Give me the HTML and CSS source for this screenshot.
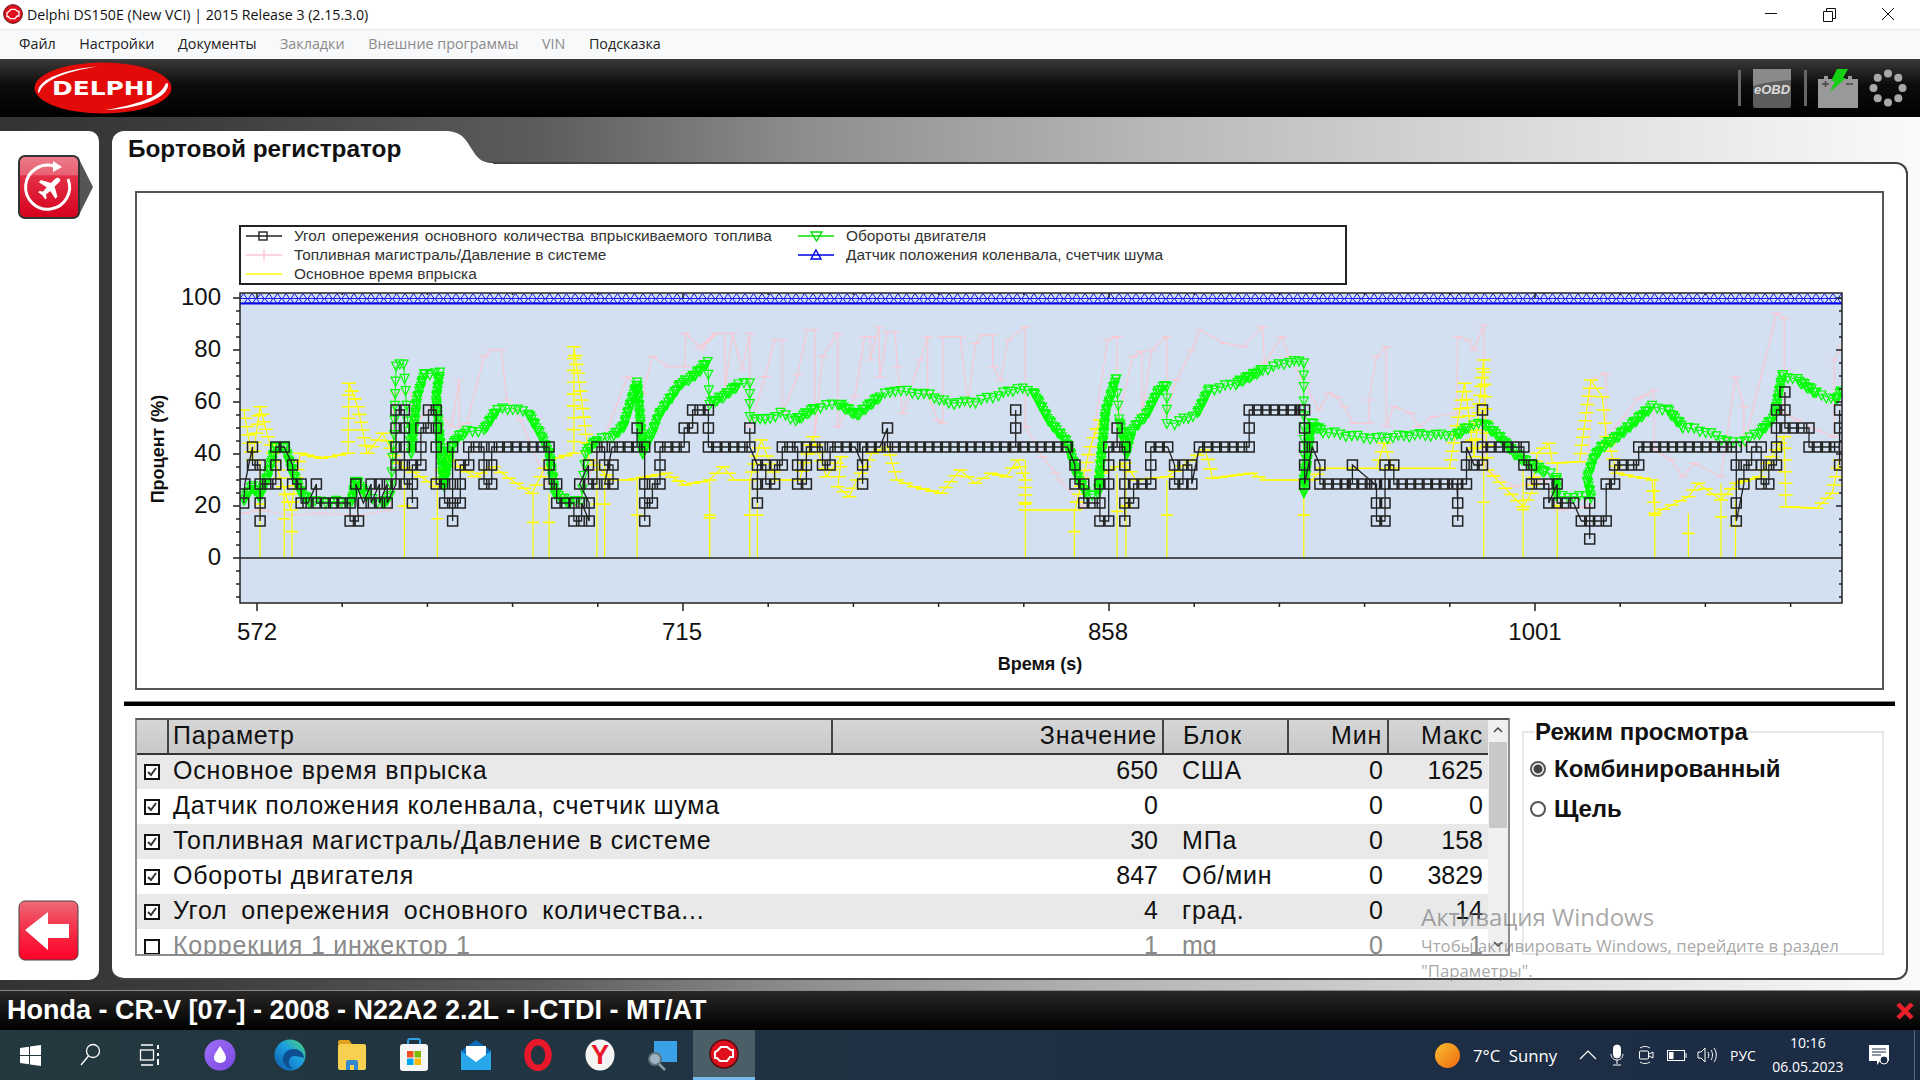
FILE: index.html
```html
<!DOCTYPE html>
<html lang="ru">
<head>
<meta charset="utf-8">
<title>Delphi DS150E</title>
<link rel="stylesheet" href="styles.css">
</head>
<body>
<svg class="defs" width="0" height="0" aria-hidden="true">
  <defs>
    <linearGradient id="gRedIco" x1="0" y1="0" x2="0" y2="1"><stop offset="0" stop-color="#ec7c8a"/><stop offset=".3" stop-color="#e86274"/><stop offset=".32" stop-color="#e43048"/><stop offset="1" stop-color="#d4001c"/></linearGradient>
    <symbol id="delphi-ico" viewBox="0 0 30 30">
      <circle cx="15" cy="15" r="14" fill="#e0101c" stroke="#5a0a10" stroke-width="1.5"/>
      <path d="M8 12l4-4h6l4 3h2v7h-3l-3 4h-7l-3-3H6v-6z" fill="none" stroke="#fff" stroke-width="2"/>
    </symbol>
    <symbol id="chk" viewBox="0 0 16 16">
      <rect x="1" y="1" width="14" height="14" fill="#fff" stroke="#111" stroke-width="2"/>
      <path d="M4 8l3 3 5-7" fill="none" stroke="#333" stroke-width="2"/>
    </symbol>
    <symbol id="unchk" viewBox="0 0 16 16">
      <rect x="1" y="1" width="14" height="14" fill="#fff" stroke="#111" stroke-width="2"/>
    </symbol>
  </defs>
</svg>

<header class="titlebar">
  <svg class="title-ico" width="20" height="20"><use href="#delphi-ico"/></svg>
  <span class="title-text">Delphi DS150E (New VCI) | 2015 Release 3 (2.15.3.0)</span>
  <div class="win-ctrls">
    <svg width="58" height="29" viewBox="0 0 58 29"><path d="M22 13.500h12" stroke="#111" fill="none"/></svg>
    <svg width="58" height="29" viewBox="0 0 58 29"><path d="M22.500 11.500h9v10h-9zM25.500 11V8.500h9v10H32" stroke="#111" fill="none"/></svg>
    <svg width="58" height="29" viewBox="0 0 58 29"><path d="M23 8l12 12M35 8L23 20" stroke="#111" fill="none"/></svg>
  </div>
</header>

<nav class="menubar">
  <span>Файл</span><span>Настройки</span><span>Документы</span>
  <span class="off">Закладки</span><span class="off">Внешние программы</span><span class="off">VIN</span>
  <span class="hint">Подсказка</span>
</nav>

<div class="appbar">
  <svg class="logo" width="138" height="52" viewBox="0 0 138 52">
    <ellipse cx="69" cy="26" rx="68.500" ry="25.500" fill="#e30a0a"/>
    <path d="M4 30C4 16 34 7 66 4 48 7 12 14 6 29 5 31 5 32 4 30z" fill="#fff"/>
    <path d="M134 22c1 14-29 25-64 26 22-3 56-11 61-25 1-2 2-3 3-1z" fill="#fff"/>
    <text class="logo-text" x="69" y="33" text-anchor="middle" textLength="102" lengthAdjust="spacingAndGlyphs">DELPHI</text>
  </svg>
  <div class="appbar-tools">
    <span class="sep"></span>
    <svg class="tool-obd" width="40" height="39" viewBox="0 0 40 39">
      <rect x="1" width="38" height="39" rx="2" fill="#5c5c5c"/>
      <path d="M1 0h38v11c-12 1-26 2-38 6z" fill="#8a8a8a"/>
      <text class="obd-text" x="20" y="25" text-anchor="middle">eOBD</text>
    </svg>
    <span class="sep"></span>
    <svg class="tool-bat" width="42" height="39" viewBox="0 0 42 39">
      <path d="M1 10h6V7h4v3h20V7h4v3h6v29H1z" fill="#999"/>
      <path d="M5 15h7M8.500 12v6M29 15h7" stroke="#444" stroke-width="1.500"/>
      <path d="M20 0h11l-5 9h3L13 23l5-11h-4z" fill="#14d010"/>
    </svg>
    <svg class="tool-dots" width="38" height="38" viewBox="0 0 38 38" fill="#a8a8a8">
      <circle cx="19" cy="4.500" r="4"/><circle cx="29.300" cy="8.700" r="4"/><circle cx="33.500" cy="19" r="4"/><circle cx="29.300" cy="29.300" r="4"/>
      <circle cx="19" cy="33.500" r="4"/><circle cx="8.700" cy="29.300" r="4"/><circle cx="4.500" cy="19" r="4"/><circle cx="8.700" cy="8.700" r="4"/>
    </svg>
  </div>
</div>

<div class="workspace">
  <aside class="sidebar">
    <svg class="side-mode" width="76" height="64" viewBox="0 0 76 64">
      <path d="M60 2l15 30-15 30z" fill="#555"/>
      <rect x="1" y="1" width="60" height="62" rx="6" fill="url(#gRedIco)" stroke="#333" stroke-width="2"/>
      <path d="M37 11.500A22 22 0 1 0 50 24" fill="none" stroke="#fff" stroke-width="3"/>
      <path d="M35 6l9 6-9 5z" fill="#fff"/>
      <g transform="translate(30.500 33) scale(.72) translate(-30.500 -33)">
        <path d="M46 20c-2-2-5-1-7 1l-5 5-14-4-3 3 11 7-5 6-5-1-2 2 6 4 4 6 2-2-1-5 6-5 7 11 3-3-4-14 5-5c2-2 4-4 2-6z" fill="#fff"/>
      </g>
    </svg>
    <svg class="side-back" width="61" height="61" viewBox="0 0 61 61">
      <defs><linearGradient id="gBack" x1="0" y1="0" x2="0" y2="1"><stop offset="0" stop-color="#ee6a78"/><stop offset=".45" stop-color="#f4324a"/><stop offset="1" stop-color="#ff0028"/></linearGradient></defs>
      <rect x="1" y="1" width="59" height="59" rx="6" fill="url(#gBack)" stroke="#444"/>
      <path d="M7 30L30 12v12h21v14H30v12z" fill="#fff"/>
    </svg>
  </aside>

  <main class="main">
    <div class="tab-row">
      <h1 class="tab">Бортовой регистратор</h1>
      <svg class="tab-curve" width="50" height="34" viewBox="0 0 50 34">
        <path d="M0 0C20 0 22 8 30 20 36 30 42 32 50 32v2H0z" fill="#fff"/>
      </svg>
    </div>
    <section class="panel">
      <div class="chart-frame">
        <svg id="chart" class="chart" width="1745" height="495" viewBox="137 193 1745 495" role="img" aria-label="График">
          <defs><clipPath id="plotClip"><rect x="240" y="293" width="1602" height="310"/></clipPath></defs>
          <rect x="240" y="293" width="1602" height="310" fill="#d2e0f1"/>
          <rect class="legend-box" x="240" y="226" width="1106" height="58"/>
          <g class="legend-keys">
            <path d="M246 236h36" stroke="#222"/><rect x="259" y="232" width="8" height="8" fill="none" stroke="#222"/>
            <path d="M246 255h36" stroke="#f9c6d0"/><path d="M264 249v12" stroke="#f9c6d0"/>
            <path d="M246 274h36" stroke="#ffff00"/>
            <path d="M798 236h36" stroke="#00e000"/><path d="M811 232h11l-5.500 9z" fill="none" stroke="#00e000"/>
            <path d="M798 255h36" stroke="#0000e0"/><path d="M816 250l5 9h-10z" fill="none" stroke="#0000e0"/>
          </g>
          <g class="legend-text">
            <text class="wide" x="294" y="241">Угол опережения основного количества впрыскиваемого топлива</text>
            <text x="294" y="260">Топливная магистраль/Давление в системе</text>
            <text x="294" y="279">Основное время впрыска</text>
            <text x="846" y="241">Обороты двигателя</text>
            <text x="846" y="260">Датчик положения коленвала, счетчик шума</text>
          </g>
          <g id="series" clip-path="url(#plotClip)"></g>
          <g id="axes"></g>
          <g class="tick-labels">
            <text x="221" y="305">100</text><text x="221" y="357">80</text><text x="221" y="409">60</text>
            <text x="221" y="461">40</text><text x="221" y="513">20</text><text x="221" y="565">0</text>
          </g>
          <g class="x-labels">
            <text x="257" y="640">572</text><text x="682" y="640">715</text><text x="1108" y="640">858</text><text x="1535" y="640">1001</text>
          </g>
          <text class="axis-title" x="1040" y="670" text-anchor="middle">Время (s)</text>
          <text class="axis-title" transform="translate(164 449) rotate(-90)" text-anchor="middle">Процент (%)</text>
        </svg>
      </div>
      <div class="divider"></div>
      <div class="lower">
        <div class="table-box">
          <div class="table-clip">
            <table class="params">
              <colgroup><col class="c-chk"><col class="c-name"><col class="c-val"><col class="c-unit"><col class="c-min"><col class="c-max"></colgroup>
              <thead>
                <tr><th></th><th class="l">Параметр</th><th class="r">Значение</th><th class="l unit">Блок</th><th class="r">Мин</th><th class="r last">Макс</th></tr>
              </thead>
              <tbody>
                <tr><td class="chk"><svg width="16" height="16"><use href="#chk"/></svg></td><td class="t">Основное время впрыска</td><td class="r">650</td><td class="unit t">США</td><td class="r">0</td><td class="r">1625</td></tr>
                <tr><td class="chk"><svg width="16" height="16"><use href="#chk"/></svg></td><td class="t">Датчик положения коленвала, счетчик шума</td><td class="r">0</td><td class="unit t"></td><td class="r">0</td><td class="r">0</td></tr>
                <tr><td class="chk"><svg width="16" height="16"><use href="#chk"/></svg></td><td class="t">Топливная магистраль/Давление в системе</td><td class="r">30</td><td class="unit t">МПа</td><td class="r">0</td><td class="r">158</td></tr>
                <tr><td class="chk"><svg width="16" height="16"><use href="#chk"/></svg></td><td class="t">Обороты двигателя</td><td class="r">847</td><td class="unit t">Об/мин</td><td class="r">0</td><td class="r">3829</td></tr>
                <tr><td class="chk"><svg width="16" height="16"><use href="#chk"/></svg></td><td class="t wide">Угол опережения основного количества...</td><td class="r">4</td><td class="unit t">град.</td><td class="r">0</td><td class="r">14</td></tr>
                <tr class="muted"><td class="chk"><svg width="16" height="16"><use href="#unchk"/></svg></td><td class="t">Коррекция 1 инжектор 1</td><td class="r">1</td><td class="unit">mg</td><td class="r">0</td><td class="r">1</td></tr>
              </tbody>
            </table>
          </div>
          <div class="scrollbar">
            <svg width="20" height="20" viewBox="0 0 20 20"><path d="M6 12l4-4 4 4" fill="none" stroke="#444" stroke-width="1.500"/></svg>
            <div class="thumb"></div>
            <svg class="down" width="20" height="20" viewBox="0 0 20 20"><path d="M6 8l4 4 4-4" fill="none" stroke="#444" stroke-width="1.500"/></svg>
          </div>
        </div>
        <fieldset class="view-mode">
          <legend>Режим просмотра</legend>
          <div class="radio-row"><span class="radio on"></span>Комбинированный</div>
          <div class="radio-row"><span class="radio"></span>Щель</div>
        </fieldset>
      </div>
    </section>
  </main>
</div>

<div class="statusbar">
  <span>Honda - CR-V [07-] - 2008 - N22A2 2.2L - I-CTDI - MT/AT</span>
  <svg class="status-x" width="20" height="20" viewBox="0 0 20 20"><path d="M3 3l14 14M17 3L3 17" stroke="#e8202a" stroke-width="4.500"/></svg>
</div>

<footer class="taskbar">
  <div class="task t60"><svg width="21" height="21" viewBox="0 0 21 21" fill="#fff"><path d="M0 3l9-1.300V10H0zM10 1.500L21 0v10H10zM0 11h9v8.300L0 18zM10 11h11v10l-11-1.500z"/></svg></div>
  <div class="task t60"><svg width="22" height="24" viewBox="0 0 22 24" fill="none" stroke="#fff" stroke-width="1.300"><circle cx="14" cy="8" r="6.500"/><path d="M9.500 13L2 22"/></svg></div>
  <div class="task t60"><svg width="22" height="22" viewBox="0 0 22 22" fill="none" stroke="#fff" stroke-width="1.300"><path d="M2 1h12M2 21h12"/><rect x="1.500" y="6" width="13" height="10"/><path d="M19 1v4M19 9v3M19 15v6" stroke-width="2"/></svg></div>
  <div class="task t60"><svg width="32" height="32" viewBox="0 0 32 32"><defs><linearGradient id="gAl" x1="0" y1="0" x2="1" y2="1"><stop offset="0" stop-color="#a070f8"/><stop offset="1" stop-color="#7a48e0"/></linearGradient></defs><circle cx="16" cy="16" r="15.500" fill="url(#gAl)"/><path d="M16 7c3 5 6 8 6 12a6 5 0 0 1-12 0c0-4 3-7 6-12z" fill="#fff"/></svg></div>
  <div class="task t62 after-alice"><svg width="32" height="32" viewBox="0 0 32 32"><defs><linearGradient id="gEd" x1="0" y1="1" x2="1" y2="0"><stop offset="0" stop-color="#0c59a4"/><stop offset=".55" stop-color="#1b9de2"/><stop offset="1" stop-color="#4fd66a"/></linearGradient></defs><circle cx="16" cy="16" r="15.500" fill="url(#gEd)"/><path d="M30 19c0-6-6-9-11-9-6 0-11 5-10 12 1 5 6 8 10 8-3-2-5-5-4-8 0-3 3-5 6-5 3 0 6 1 9 2z" fill="#0d4f90"/></svg></div>
  <div class="task t62"><svg width="30" height="32" viewBox="0 0 30 32"><path d="M1 3a2 2 0 0 1 2-2h9l3 4h-14z" fill="#e0a020"/><rect x="1" y="5" width="28" height="26" rx="2" fill="#f8d050"/><path d="M9 31V23a2 2 0 0 1 2-2h8a2 2 0 0 1 2 2v8h-4v-5h-4v5z" fill="#2f88d0"/></svg></div>
  <div class="task t62"><svg width="30" height="34" viewBox="0 0 30 34"><path d="M9 6V3a2 2 0 0 1 2-2h8a2 2 0 0 1 2 2v3" fill="none" stroke="#2f9fe8" stroke-width="2"/><rect x="1" y="6" width="28" height="27" rx="3" fill="#f6f6f6"/><rect x="8" y="13" width="6.500" height="6.500" fill="#f25022"/><rect x="15.500" y="13" width="6.500" height="6.500" fill="#7fba00"/><rect x="8" y="20.500" width="6.500" height="6.500" fill="#00a4ef"/><rect x="15.500" y="20.500" width="6.500" height="6.500" fill="#ffb900"/></svg></div>
  <div class="task t62"><svg width="30" height="30" viewBox="0 0 30 30"><path d="M0 11L15 0l15 11v19H0z" fill="#0c6cb8"/><path d="M5 6h20v16H5z" fill="#fff"/><path d="M0 11l15 11 15-11v19H0z" fill="#28a8ea"/></svg></div>
  <div class="task t62"><svg width="30" height="32" viewBox="0 0 30 32"><ellipse cx="15" cy="16" rx="10.500" ry="13" fill="none" stroke="#e8182a" stroke-width="6.500"/></svg></div>
  <div class="task t62"><svg width="30" height="32" viewBox="0 0 30 32"><ellipse cx="15" cy="16" rx="14.500" ry="15.500" fill="#f4f4f4"/><text class="yx" x="15" y="25" text-anchor="middle">Y</text></svg></div>
  <div class="task t62"><svg width="32" height="32" viewBox="0 0 32 32"><rect x="8" y="2" width="23" height="21" fill="#3aa0e8"/><circle cx="9" cy="20" r="6" fill="#9fb4c4" stroke="#607078" stroke-width="2"/><path d="M13 25l6 6" stroke="#8a98a0" stroke-width="2.500"/></svg></div>
  <div class="task t62 active"><svg width="30" height="30"><use href="#delphi-ico"/></svg></div>
  <div class="tray">
    <span class="sun"></span>
    <span class="weather">7°C&nbsp;&nbsp;Sunny</span>
    <svg class="tr chev" width="18" height="10" viewBox="0 0 18 10"><path d="M1 9l8-8 8 8" fill="none" stroke="#fff" stroke-width="1.200"/></svg>
    <svg class="tr" width="14" height="22" viewBox="0 0 14 22" fill="none" stroke="#fff"><rect x="3.500" y="1" width="7" height="13" rx="3.500" fill="#fff"/><path d="M1 10c0 8 12 8 12 0M7 16v4M3 21h8"/></svg>
    <svg class="tr" width="16" height="20" viewBox="0 0 16 20" fill="none" stroke="#fff"><rect x="1.500" y="6" width="9" height="8" rx="1"/><path d="M11 9l4-2v6l-4-2M2 3c3-2 7-2 10 0M2 17c3 2 7 2 10 0"/></svg>
    <svg class="tr" width="20" height="11" viewBox="0 0 20 11" fill="none" stroke="#fff"><rect x=".5" y=".5" width="17" height="10"/><rect x="2" y="2" width="4.500" height="7" fill="#fff" stroke="none"/><path d="M19 3v5"/></svg>
    <svg class="tr" width="20" height="16" viewBox="0 0 20 16" fill="none" stroke="#fff"><path d="M1 5h3l4-4v14l-4-4H1zM11 5c1 2 1 4 0 6M14 3c2 3 2 7 0 10M17 1c3 4 3 10 0 14"/></svg>
    <span class="lang">РУС</span>
    <span class="clock"><span>10:16</span><span>06.05.2023</span></span>
    <svg class="notif" width="20" height="20" viewBox="0 0 20 20"><path d="M0 0h20v16h-9l-3 4v-4H0z" fill="#fff"/><path d="M3 4h14M3 7h14M3 10h9" stroke="#1b2b45"/><circle cx="15" cy="15" r="4" fill="#1b2b45" stroke="#fff"/></svg>
    <span class="edge-line"></span>
  </div>
</footer>

<div class="watermark">
  <div class="wm-big">Активация Windows</div>
  <div>Чтобы активировать Windows, перейдите в раздел</div>
  <div>"Параметры".</div>
</div>

<script src="chart.js"></script>
</body>
</html>
```

FILE: styles.css
```css
* { box-sizing: border-box; }
html, body { margin: 0; padding: 0; }
body {
  position: relative;
  width: 1920px;
  height: 1080px;
  overflow: hidden;
  display: flex;
  flex-direction: column;
  font-family: "Liberation Sans", Arial, sans-serif;
  background: #000;
}
.defs { position: absolute; }

.titlebar {
  height: 29px;
  flex: none;
  display: flex;
  align-items: center;
  background: #fff;
  padding: 0 0 1px 3px;
  font: 14.2px "Open Sans", sans-serif;
  color: #111;
}
.title-ico { margin-right: 4px; }
.win-ctrls { margin-left: auto; display: flex; margin-right: 3px; }

.menubar {
  height: 30px;
  flex: none;
  display: flex;
  align-items: center;
  gap: 23.5px;
  padding: 0 0 2px 19px;
  background: #f8f9fb;
  border-top: 1px solid #e4eaf2;
  font: 14.35px "Open Sans", sans-serif;
  color: #222;
}
.menubar .off { color: #8a8a8a; }

.appbar {
  height: 58px;
  flex: none;
  display: flex;
  align-items: center;
  padding-left: 34px;
  background: linear-gradient(#3c3a38, #0c0c0c 45%, #000);
}
.logo-text { font: bold 19px "DejaVu Sans", sans-serif; fill: #fff; }
.appbar-tools { margin-left: auto; display: flex; align-items: center; margin-right: 13px; }
.sep { width: 3px; height: 36px; background: #666; }
.tool-obd { margin: 0 12px 0 11px; }
.obd-text { font: italic bold 13px "Liberation Sans", sans-serif; fill: #ddd; }
.tool-bat { margin-left: 10px; }
.tool-dots { margin-left: 10px; }

.workspace {
  height: 873px;
  flex: none;
  display: flex;
  padding: 14px 12px 10px 0;
  background: linear-gradient(90deg, #333 0, #3c3c3c 10%, #5c5c5c 28%, #8e8e8e 42%, #b8b8b8 60%, #dcdcdc 80%, #fafafa 100%);
}
.sidebar {
  width: 99px;
  flex: none;
  display: flex;
  flex-direction: column;
  justify-content: space-between;
  padding: 24px 0 19px 18px;
  background: #fff;
  border-radius: 0 10px 10px 0;
}
.main { margin-left: 13px; flex: 1; display: flex; flex-direction: column; min-width: 0; }
.tab-row { height: 33px; flex: none; display: flex; position: relative; z-index: 1; margin-bottom: -2px; }
.tab {
  width: 331px;
  height: 34px;
  margin: 0;
  padding: 3px 0 0 16px;
  background: #fff;
  border-radius: 12px 0 0 0;
  font-size: 24.35px;
  font-weight: bold;
  color: #111;
  line-height: 29px;
}
.panel {
  flex: 1;
  display: flex;
  flex-direction: column;
  background: #fff;
  border: 2px solid #444;
  border-left: 0;
  border-radius: 0 12px 12px 12px;
  padding: 27px 22px 21px 23px;
}
.chart-frame { height: 499px; flex: none; border: 2px solid #555; background: #fff; }
.chart { display: block; }
.legend-box { fill: #fff; stroke: #222; stroke-width: 2; }
.legend-keys path, .legend-keys rect { stroke-width: 1.4; }
.legend-text text { font: 15.4px "Liberation Sans", sans-serif; fill: #333; }
.legend-text .wide { word-spacing: 2px; }
.tick-labels text { font: 24px "Liberation Sans", sans-serif; fill: #111; text-anchor: end; }
.x-labels text { font: 24px "Liberation Sans", sans-serif; fill: #111; text-anchor: middle; }
.axis-title { font: bold 18px "Liberation Sans", sans-serif; fill: #111; }

.divider {
  height: 5px;
  flex: none;
  margin: 11px -11px 12px;
  background: #000;
  border-top: 1px solid #888;
}
.lower { flex: 1; display: flex; min-height: 0; gap: 12px; }
.table-box {
  width: 1375px;
  height: 238px;
  flex: none;
  display: flex;
  border: 2px solid #8c8c8c;
  border-top-color: #555;
  background: #fff;
}
.table-clip { flex: 1; overflow: hidden; min-width: 0; }
.params { border-collapse: collapse; table-layout: fixed; width: 100%; font-size: 25px; color: #111; }
.c-chk { width: 31px; }
.c-name { width: 664px; }
.c-val { width: 331px; }
.c-unit { width: 125px; }
.c-min { width: 100px; }
.c-max { width: auto; }
.params th {
  height: 34px;
  padding: 0 5px 3px 4px;
  font-weight: normal;
  letter-spacing: .8px;
  background: linear-gradient(#d6d6d6, #c8c8c8);
  border-right: 2px solid #444;
  border-bottom: 2px solid #333;
  overflow: hidden;
  white-space: nowrap;
}
.params th.last { border-right: 0; }
.params td {
  height: 35px;
  padding: 0 5px 3px;
  white-space: nowrap;
  overflow: hidden;
}
.params .t { letter-spacing: .8px; }
.params tbody tr:nth-child(odd) td { background: #e9e9e9; }
.params .l { text-align: left; }
.params .r { text-align: right; }
.params .unit { padding-left: 19px; }
.params .chk { padding: 0 0 0 7px; }
.params .chk svg { display: block; }
.params .wide { word-spacing: 6px; }
.params .muted td { color: #8a8a8a; }
.scrollbar { width: 20px; flex: none; display: flex; flex-direction: column; background: #f0f0f0; position: relative; }
.thumb { width: 18px; height: 86px; margin: 2px 0 0 1px; background: #c8c8c8; }
.scrollbar .down { margin-top: auto; }

.view-mode {
  width: 362px;
  height: 237px;
  margin: 0;
  padding: 0 0 0 6px;
  flex: none;
  border: 2px solid #e8e8e8;
}
.view-mode legend { padding: 0; margin-left: 5px; font-size: 24px; font-weight: bold; color: #111; line-height: 28px; }
.radio-row { display: flex; align-items: center; height: 40px; font-size: 24px; font-weight: bold; color: #111; }
.radio-row:first-of-type { margin-top: 3px; }
.radio {
  width: 16px;
  height: 16px;
  margin-right: 8px;
  border: 2px solid #555;
  border-radius: 50%;
  background: #fff;
  flex: none;
}
.radio.on { background: radial-gradient(circle, #444 0 4px, #fff 5px); }

.statusbar {
  height: 40px;
  flex: none;
  display: flex;
  align-items: center;
  padding: 0 5px 0 7px;
  background: linear-gradient(#2a2826, #000);
  font-size: 27px;
  font-weight: bold;
  color: #fff;
  border-top: 1px solid #888;
}
.status-x { margin-left: auto; }

.taskbar {
  height: 50px;
  flex: none;
  display: flex;
  align-items: center;
  background: linear-gradient(90deg, #24383f, #1f3343 40%, #1b2b45);
  color: #fff;
  font: 16px "Open Sans", sans-serif;
}
.task { height: 50px; flex: none; display: flex; align-items: center; justify-content: center; }
.t60 { width: 60px; }
.t60:nth-child(4) { margin-left: 10px; }
.t62 { width: 62px; }
.after-alice { margin-left: 9px; }
.active { background: #4a5e68; border-bottom: 3px solid #76b9ed; width: 62px; }
.yx { font: bold 27px "Liberation Sans", sans-serif; fill: #e8182a; }
.tray { margin-left: auto; display: flex; align-items: center; height: 50px; width: 495px; position: relative; }
.sun {
  width: 25px; height: 25px; margin-left: 10px; flex: none; border-radius: 50%;
  background: linear-gradient(135deg, #f8c030, #f06810);
}
.weather { margin-left: 13px; width: 100px; font-size: 16.7px; }
.tr { flex: none; }
.chev { margin-left: 6px; }
.tr:nth-of-type(2) { margin-left: 13px; }
.tr:nth-of-type(3) { margin-left: 14px; }
.tr:nth-of-type(4) { margin-left: 13px; }
.tr:nth-of-type(5) { margin-left: 10px; }
.lang { margin-left: 13px; font-size: 14px; }
.clock { margin-left: 8px; width: 88px; display: flex; flex-direction: column; align-items: center; font-size: 14px; line-height: 24px; }
.notif { margin-left: 17px; }
.edge-line { position: absolute; right: 5px; top: 0; height: 50px; width: 1px; background: #5a6a80; }

.watermark {
  position: absolute;
  left: 1421px;
  top: 899px;
  font: 16.8px/24.5px "Open Sans", sans-serif;
  color: rgba(110, 110, 110, .62);
  white-space: nowrap;
}
.wm-big { font-size: 24px; line-height: 35px; margin-bottom: 0; }
```

FILE: chart.js
```js
(function () {
  var NS = 'http://www.w3.org/2000/svg';
  var series = document.getElementById('series');
  var axes = document.getElementById('axes');

  function add(parent, tag, attrs) {
    var el = document.createElementNS(NS, tag);
    for (var k in attrs) el.setAttribute(k, attrs[k]);
    parent.appendChild(el);
    return el;
  }
  function r(v) { return Math.round(v * 10) / 10; }

  // The point lists below were read from three crops, each with its own origin.
  var A = { x: function (X) { return 130 + X / 2.613; }, y: function (Y) { return 220 + Y / 3; } };
  var B = { x: function (X) { return 700 + X / 2.613; }, y: function (Y) { return 280 + Y / 3; } };
  var C = { x: function (X) { return 1300 + X / 2.613; }, y: function (Y) { return 280 + Y / 3; } };

  function pts(list, map) {
    var out = [];
    for (var i = 0; i < list.length; i += 2) out.push([map.x(list[i]), map.y(list[i + 1])]);
    return out;
  }
  function resample(p, step, spikeStep, steepStep) {
    var out = [];
    for (var i = 0; i < p.length - 1; i++) {
      var dx = p[i + 1][0] - p[i][0], dy = p[i + 1][1] - p[i][1];
      var len = Math.sqrt(dx * dx + dy * dy);
      var s = step;
      if (Math.abs(dx) < 4 && len > 30) s = spikeStep;
      else if (steepStep && Math.abs(dy) > Math.abs(dx) * 0.45) s = steepStep;
      var n = Math.max(1, Math.round(len / s));
      for (var j = 0; j < n; j++) out.push([p[i][0] + dx * j / n, p[i][1] + dy * j / n]);
    }
    out.push(p[p.length - 1]);
    return out;
  }
  function line(p) {
    return 'M' + p.map(function (q) { return r(q[0]) + ' ' + r(q[1]); }).join('L');
  }

  /* ---------- pink: rail pressure ---------- */
  var pink = pts([297,880, 340,870, 420,885, 500,880, 600,885, 680,870, 690,520, 735,520, 735,620, 790,560, 840,620,
    860,480, 860,620, 880,610, 925,410, 945,390, 970,390, 985,540, 1020,600, 1090,790, 1170,860, 1300,470, 1340,520,
    1365,410, 1410,440, 1450,440, 1452,340, 1490,380, 1530,340], A)
    .concat(pts([0,210, 45,160, 65,160, 65,330, 85,160, 110,270, 130,160, 130,440, 170,290, 195,180, 215,180, 215,400,
    255,285, 280,150, 300,150, 300,470, 320,230, 360,160, 360,440, 405,350, 430,170, 445,170, 445,240, 468,140, 470,290,
    490,155, 510,155, 515,260, 530,400, 575,240, 595,170, 595,340, 620,420, 635,430, 635,170, 660,170, 680,170, 700,370,
    720,190, 740,165, 765,165, 765,260, 785,300, 805,180, 850,140, 850,440, 895,530, 930,580, 940,600, 1000,680, 1065,180,
    1090,170, 1090,440, 1130,230, 1155,215, 1155,400, 1180,210, 1220,170, 1220,400, 1245,300, 1285,210, 1305,150, 1370,190,
    1420,200, 1470,140, 1475,250, 1520,170, 1540,230], B))
    .concat(pts([50,390, 75,340, 95,350, 115,380, 140,430, 180,430, 180,360, 200,230, 225,200, 225,440, 245,380, 290,400,
    310,440, 350,410, 410,400, 412,170, 440,180, 455,210, 480,135, 480,550, 500,580, 560,620, 600,610, 640,600, 680,690,
    750,680, 760,300, 800,280, 800,470, 885,355, 905,345, 925,330, 925,510, 970,540, 1000,590, 1030,550, 1100,590, 1138,290,
    1160,380, 1160,500, 1245,100, 1265,115, 1265,400, 1300,420, 1350,450, 1395,470, 1395,240, 1417,200], C));
  add(series, 'path', { d: line(pink), fill: 'none', stroke: '#f9c8d2', 'stroke-width': 1.2 });
  var pd = '';
  pink.forEach(function (q) { pd += 'M' + r(q[0] - 5) + ' ' + r(q[1]) + 'h10'; });
  add(series, 'path', { d: pd, fill: 'none', stroke: '#f9c8d2', 'stroke-width': 1.2 });

  /* ---------- yellow: injection time ---------- */
  var yellow = pts([297,570, 320,720, 340,560, 360,650, 400,800, 420,870, 445,700, 500,715, 570,700, 572,490, 595,560,
    620,700, 660,640, 700,730, 760,770, 800,800, 830,700, 860,740, 900,770, 950,740, 990,775, 1050,820, 1095,720, 1160,700,
    1160,380, 1180,540, 1200,720, 1260,780, 1300,780, 1400,760, 1450,795], A)
    .concat(pts([25,600, 60,560, 90,600, 130,600, 160,480, 200,600, 260,600, 295,470, 330,590, 370,530, 360,620, 390,650,
    410,600, 450,520, 490,500, 515,600, 560,620, 630,640, 680,570, 720,610, 760,580, 800,590, 830,540, 850,600, 850,690, 980,690,
    1020,500, 1045,420, 1050,580, 1110,550, 1140,600, 1220,590, 1320,510, 1340,595, 1440,580, 1480,600], B))
    .concat(pts([30,600, 60,565, 200,565, 220,490, 240,565, 390,565, 430,310, 455,530, 480,240, 490,570, 583,680, 605,640,
    620,520, 650,490, 660,550, 730,545, 760,300, 790,350, 800,470, 830,580, 920,600, 927,700, 1015,650, 1040,610, 1100,660,
    1140,610, 1200,590, 1265,470, 1270,680, 1350,685, 1390,640, 1410,540], C));
  var spikes = [[A, [340, 403, 423, 717, 803, 1053, 1095, 1220, 1240, 1325, 1515]],
    [B, [25, 130, 150, 850, 978, 1090, 1113, 1220]],
    [C, [10, 480, 583, 672, 927, 1015, 1100, 1138]]];
  function yellowAt(x) {
    for (var i = 0; i < yellow.length - 1; i++) {
      if (yellow[i][0] <= x && yellow[i + 1][0] >= x) return yellow[i][1];
    }
    return 480;
  }
  var yd = line(yellow);
  spikes.forEach(function (g) {
    g[1].forEach(function (X) {
      var x = g[0].x(X), y0 = yellowAt(x);
      yd += 'M' + r(x) + ' ' + r(y0) + 'V558';
    });
  });
  add(series, 'path', { d: yd, fill: 'none', stroke: '#ffff00', 'stroke-width': 1.2 });
  var yb = '', ys = resample(yellow, 8.5, 12);
  ys.forEach(function (q) { yb += 'M' + r(q[0] - 7) + ' ' + r(q[1]) + 'h14'; });
  spikes.forEach(function (g) {
    g[1].forEach(function (X) {
      var x = g[0].x(X), y0 = yellowAt(x);
      yb += 'M' + r(x - 6) + ' ' + r(y0 + (558 - y0) * 0.45) + 'h12';
    });
  });
  add(series, 'path', { d: yb, fill: 'none', stroke: '#ffff00', 'stroke-width': 1.6 });

  /* ---------- green: engine speed ---------- */
  var green = pts([297,840, 320,800, 340,830, 360,770, 381,680, 403,680, 425,760, 447,820, 470,845, 580,845, 590,780, 620,830,
    660,850, 680,830, 690,640, 695,440, 715,430, 725,600, 735,700, 750,540, 770,460, 810,460, 800,540, 820,800, 840,680, 860,650,
    880,635, 925,630, 960,570, 1000,565, 1040,580, 1070,640, 1095,700, 1110,820, 1150,850, 1180,840, 1190,700, 1220,660, 1260,650,
    1290,620, 1325,490, 1340,700, 1365,640, 1385,580, 1410,540, 1440,490, 1470,470], A)
    .concat(pts([0,270, 20,245, 25,370, 60,350, 100,315, 130,305, 130,410, 170,420, 210,400, 250,420, 300,385, 360,370, 410,405,
    470,350, 510,330, 600,345, 650,370, 720,365, 780,345, 830,325, 870,335, 910,420, 960,490, 985,590, 1010,645, 1040,640,
    1060,400, 1088,295, 1095,420, 1115,520, 1130,450, 1170,400, 1200,330, 1220,315, 1220,430, 1240,430, 1300,400, 1330,330,
    1400,310, 1470,270, 1540,245], B))
    .concat(pts([10,245, 10,640, 30,430, 60,455, 150,470, 200,475, 300,465, 410,465, 440,440, 480,430, 520,470, 560,520, 590,545,
    640,575, 670,590, 670,650, 760,650, 750,600, 770,530, 790,500, 830,470, 880,420, 920,380, 960,390, 1000,440, 1060,455, 1130,490,
    1150,485, 1200,460, 1240,410, 1250,350, 1262,285, 1300,300, 1350,340, 1400,360, 1417,330], C));
  add(series, 'path', { d: line(green), fill: 'none', stroke: '#00ff00', 'stroke-width': 1 });
  var gd = '';
  resample(green, 5.5, 13, 2.2).forEach(function (q, i) {
    var j = Math.sin(i * 1.7) * 1.3;
    gd += 'M' + r(q[0] - 4.5) + ' ' + r(q[1] - 4 + j) + 'h9l-4.5 9z';
  });
  add(series, 'path', { d: gd, fill: 'none', stroke: '#00ff00', 'stroke-width': 1.2 });

  /* ---------- black: injection advance, discrete levels ---------- */
  var lv = { a: 392, b: 410, c: 428, d: 447, e: 465, f: 484, g: 503, h: 521, i: 539 };
  function black(str, map) {
    var out = [];
    str.split(/\s+/).forEach(function (tok) {
      var m = /^(\d+)(?:-(\d+))?([a-i])$/.exec(tok);
      if (!m) return;
      var a = +m[1], b = m[2] ? +m[2] : a, y = lv[m[3]];
      for (var X = a; X <= b; X += 22) out.push([map.x(X), y]);
      if (m[2] && (b - a) % 22) out.push([map.x(b), y]);
    });
    return out;
  }
  var bk = black('297g 300f 320d 320e 340e 340f 340g 340h 340f 360f 381f 381e 381d 403d 425e 425f 447f 447g 465g 487f 487g ' +
    '510-555g 575g 575h 597h 590f 610g 630f 630g 652f 652g 672f 672g 695f 695e 695d 695c 695b 717b 717c 717d 717e 717f 738f 738g 738e ' +
    '760e 760d 760c 780c 780b 800b 800c 800d 800f 822f 822g 843g 843f 843d 843f 843h 843g 863g 863f 863e 885e 885d 905d 925d 925e 925f ' +
    '945f 945e 945d 965-1095d 1095e 1095f 1115f 1115g 1137g 1160g 1160h 1180h 1180g 1200h 1200g 1175f 1198e 1198f 1220f 1220d 1240d 1240e ' +
    '1262e 1262f 1240f 1260d 1280-1325d 1325c 1325d 1345d 1345f 1345g 1345h 1345g 1365g 1365f 1385f 1385e 1385d 1405-1448d 1448c 1470c 1470b', A)
    .concat(black('0b 22b 22c 22d 22-130d 130c 130d 150e 150f 150g 150e 172e 172f 195f 195e 215e 215d 235d 255d 255e 255f 278f 278e 278d ' +
    '300d 320d 320e 340e 340d 360-405d 425e 425f 425d 447-470d 490c 490d 510-825d 825c 825b 825d 825-960d 980e 980f 1003f 1003g 1025g 1045g 1045f 1045h ' +
    '1068h 1068f 1068e 1068d 1090d 1090c 1090d 1110d 1110e 1110f 1110g 1110h 1110g 1133g 1133f 1155f 1178f 1178e 1178d 1200d 1222d 1240e 1240f ' +
    '1262f 1262e 1285e 1285f 1305d 1305-1435d 1435c 1435b 1435-1550b', B))
    .concat(black('0b 12b 12c 12d 12e 12f 32d 52e 52f 52-195f 137e 137f 200f 200g 200h 222h 222g 222f 222e 245e 245f 245-410f 412g 412h 412f 435f 435e 435d ' +
    '455e 477e 477d 477b 477d 477-585d 585e 605e 605f 625f 650f 650g 672f 672g 672-715g 735h 757h 757i 757g 757h 780h 800h 800f 822f 822e 822-885e ' +
    '885d 885-1140d 1140e 1140g 1140h 1160f 1160e 1180e 1180d 1205d 1205e 1205f 1225f 1225e 1245e 1245d 1245c 1245b 1267b 1267a 1267c 1267-1330c 1330d 1330-1410d 1410c 1410b 1410e', C));

  /* ---------- blue band, drawn under the black series ---------- */
  var bl = '';
  for (var x = 240; x < 1846; x += 8.5) {
    bl += 'M' + r(x) + ' 298.500l3.500-5 3.500 5zM' + r(x + 4.25) + ' 303l3.500-5 3.500 5z';
  }
  add(series, 'path', { d: bl, fill: 'none', stroke: '#0000f0', 'stroke-width': 0.9 });
  add(series, 'path', { d: 'M240 303.500H1842', fill: 'none', stroke: '#0000f0', 'stroke-width': 2 });

  add(series, 'path', { d: line(bk), fill: 'none', stroke: '#222', 'stroke-width': 1.3 });
  var bd = '';
  bk.forEach(function (q) { bd += 'M' + r(q[0] - 5) + ' ' + r(q[1] - 5) + 'h10v10h-10z'; });
  add(series, 'path', { d: bd, fill: 'none', stroke: '#222', 'stroke-width': 1.5 });

  /* ---------- axes ---------- */
  var ad = 'M240 293H1842V603H240ZM233 558H1842';
  for (var i = -3; i <= 20; i++) {
    var y = 558 - i * 13;
    var major = i >= 0 && i % 4 === 0;
    ad += 'M' + (major ? 233 : 236) + ' ' + y + 'H240';
    ad += 'M1842 ' + y + 'h-' + (major ? 6 : 3);
  }
  for (var k = 0; k < 19; k++) {
    var tx = r(257 + 85.2 * k), big = k % 5 === 0;
    ad += 'M' + tx + ' 603V' + (big ? 611 : 607);
    ad += 'M' + tx + ' 293v' + (big ? 5 : 2);
  }
  add(axes, 'path', { d: ad, fill: 'none', stroke: '#222', 'stroke-width': 1.5 });
})();
```
